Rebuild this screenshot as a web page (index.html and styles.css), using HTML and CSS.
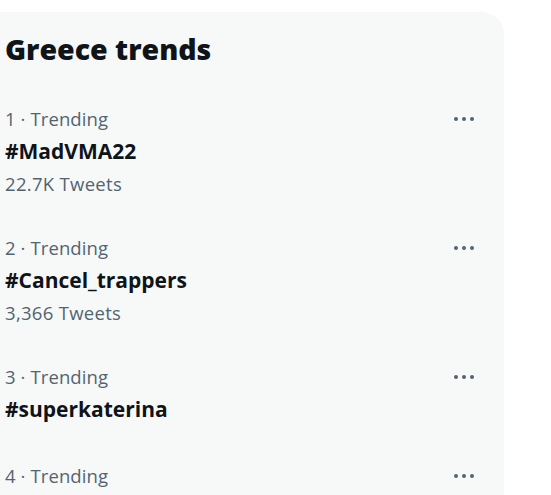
FILE: index.html
```html
<!DOCTYPE html>
<html>
<head>
<meta charset="utf-8">
<link rel="stylesheet" href="styles.css">
</head>
<body>
<section class="card">
  <h2 class="title">Greece trends</h2>
  <div class="trend">
    <div class="info">
      <div class="meta">1 · Trending</div>
      <div class="name">#MadVMA22</div>
      <div class="count">22.7K Tweets</div>
    </div>
    <div class="more"><span></span><span></span><span></span></div>
  </div>
  <div class="trend">
    <div class="info">
      <div class="meta">2 · Trending</div>
      <div class="name">#Cancel_trappers</div>
      <div class="count">3,366 Tweets</div>
    </div>
    <div class="more"><span></span><span></span><span></span></div>
  </div>
  <div class="trend">
    <div class="info">
      <div class="meta">3 · Trending</div>
      <div class="name">#superkaterina</div>
    </div>
    <div class="more"><span></span><span></span><span></span></div>
  </div>
  <div class="trend">
    <div class="info">
      <div class="meta">4 · Trending</div>
    </div>
    <div class="more"><span></span><span></span><span></span></div>
  </div>
</section>
</body>
</html>
```
FILE: styles.css
```css
html, body {
  margin: 0;
  padding: 0;
  background: #ffffff;
  overflow: hidden;
}
body {
  font-family: "Open Sans", "Liberation Sans", sans-serif;
  color: #0f1419;
}
.card {
  margin-top: 12px;
  width: 504px;
  background: #f7f9f9;
  border-top-right-radius: 22px;
  padding-bottom: 40px;
}
.title {
  margin: 0;
  padding: 20px 0 22px 5px;
  font-size: 28.5px;
  line-height: 34px;
  font-weight: 800;
}
.trend {
  display: flex;
  align-items: flex-start;
  justify-content: space-between;
  padding: 17px 30px 18px 5px;
}
.meta {
  font-size: 18.5px;
  line-height: 28px;
  letter-spacing: 0.1px;
  color: #536471;
}
.name {
  font-size: 21px;
  line-height: 36px;
  font-weight: 700;
}
.count {
  font-size: 18.5px;
  line-height: 30px;
  letter-spacing: 0.3px;
  color: #536471;
}
.more {
  display: flex;
  gap: 4px;
  height: 28px;
  align-items: center;
}
.more span {
  width: 4px;
  height: 4px;
  border-radius: 50%;
  background: #536471;
}
```
